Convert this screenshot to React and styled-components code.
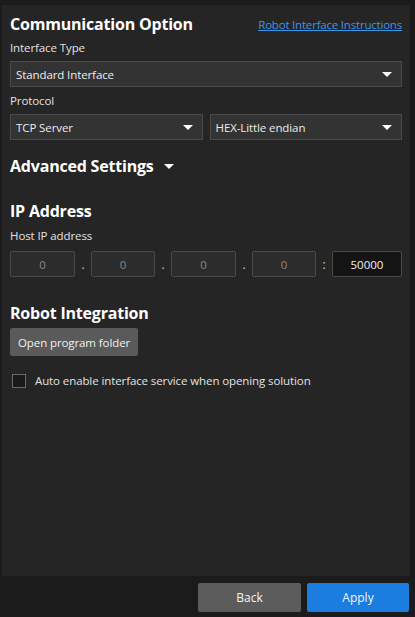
import React from "react";
import styled, { createGlobalStyle } from "styled-components";

const GlobalStyle = createGlobalStyle`
  html, body {
    margin: 0;
    padding: 0;
    background: #1b1b1b;
    font-family: "Open Sans", "Noto Sans", sans-serif;
    color: #e6e6e6;
  }
  * { box-sizing: border-box; }
`;

const Page = styled.div`
  height: 617px;
  display: flex;
  flex-direction: column;
`;

const Panel = styled.div`
  flex: 1;
  margin: 5px 5px 0 2px;
  background: #252525;
  padding: 8px 8px 0 8px;
`;

const HeaderRow = styled.div`
  display: flex;
  justify-content: space-between;
  align-items: center;
  height: 22px;
`;

const Title = styled.h2`
  margin: 0;
  font-size: 16px;
  line-height: 22px;
  font-weight: 700;
  color: #ffffff;
  letter-spacing: -0.2px;
  display: flex;
  align-items: center;
  gap: 10px;
`;

const Link = styled.a`
  font-size: 11.5px;
  color: #3b97e8;
  text-decoration: underline;
  cursor: pointer;
  letter-spacing: -0.2px;
`;

const Label = styled.div`
  font-size: 11.5px;
  color: #e2e2e2;
  margin: ${p => p.$top ?? 6}px 0 ${p => p.$bottom ?? 5}px;
  line-height: 16px;
  letter-spacing: -0.1px;
`;

const Row = styled.div`
  display: flex;
  align-items: center;
  gap: ${p => p.$gap ?? 7}px;
`;

const Select = styled.div`
  flex: 1;
  height: 26px;
  background: #333333;
  border: 1px solid #4a4a4a;
  display: flex;
  align-items: center;
  justify-content: space-between;
  padding: 0 9px 0 5px;
  font-size: 11.5px;
  color: #ececec;
  letter-spacing: -0.1px;
`;

const Caret = styled.span`
  width: 0;
  height: 0;
  border-left: 5px solid transparent;
  border-right: 5px solid transparent;
  border-top: 5px solid #ffffff;
`;

const Section = styled.div`
  margin-top: ${p => p.$top}px;
`;

const IpBox = styled.div`
  flex: none;
  width: ${p => p.$w}px;
  height: 26px;
  border: 1px solid #4a4a4a;
  background: ${p => (p.$dark ? "#141414" : "#2c2c2c")};
  color: ${p => (p.$dark ? "#f2f2f2" : "#8a8a8a")};
  font-size: 11.5px;
  display: flex;
  align-items: center;
  justify-content: center;
  border-radius: 2px;
`;

const Sep = styled.span`
  flex: none;
  width: 16px;
  text-align: center;
  font-size: 12px;
  color: #cfcfcf;
`;

const GreyButton = styled.button`
  display: block;
  height: 28px;
  padding: 0 8px;
  background: #5a5a5a;
  border: none;
  border-radius: 2px;
  color: #f0f0f0;
  font-family: inherit;
  font-size: 11.5px;
  letter-spacing: -0.1px;
  margin-top: 4px;
`;

const CheckRow = styled.label`
  display: flex;
  align-items: center;
  gap: 9px;
  margin-top: 17px;
  padding-left: 2px;
  font-size: 11.5px;
  color: #e2e2e2;
  letter-spacing: -0.1px;
`;

const Box = styled.span`
  width: 14px;
  height: 14px;
  border: 1px solid #6a6a6a;
  background: #1a1a1a;
`;

const Footer = styled.div`
  display: flex;
  justify-content: flex-end;
  gap: 6px;
  padding: 7px 6px 5px;
`;

const FooterButton = styled.button`
  width: ${p => p.$w}px;
  height: 29px;
  border: none;
  border-radius: 2px;
  background: ${p => (p.$primary ? "#1a7ddf" : "#5c5c5c")};
  color: #f4f4f4;
  font-family: inherit;
  font-size: 12px;
`;

export default function App() {
  return (
    <Page>
      <GlobalStyle />
      <Panel>
        <HeaderRow>
          <Title>Communication Option</Title>
          <Link>Robot Interface Instructions</Link>
        </HeaderRow>
        <Label $top={5}>Interface Type</Label>
        <Select>
          Standard Interface <Caret />
        </Select>
        <Label $top={6}>Protocol</Label>
        <Row>
          <Select>
            TCP Server <Caret />
          </Select>
          <Select>
            HEX-Little endian <Caret />
          </Select>
        </Row>

        <Section $top={15}>
          <Title>
            Advanced Settings <Caret />
          </Title>
        </Section>

        <Section $top={23}>
          <Title>IP Address</Title>
          <Label $top={6} $bottom={7}>Host IP address</Label>
          <Row $gap={0}>
            <IpBox $w={65}>0</IpBox>
            <Sep>.</Sep>
            <IpBox $w={64}>0</IpBox>
            <Sep>.</Sep>
            <IpBox $w={65}>0</IpBox>
            <Sep>.</Sep>
            <IpBox $w={64}>0</IpBox>
            <Sep>:</Sep>
            <IpBox $w={70} $dark>50000</IpBox>
          </Row>
        </Section>

        <Section $top={25}>
          <Title>Robot Integration</Title>
          <GreyButton>Open program folder</GreyButton>
          <CheckRow>
            <Box />
            Auto enable interface service when opening solution
          </CheckRow>
        </Section>
      </Panel>
      <Footer>
        <FooterButton $w={103}>Back</FooterButton>
        <FooterButton $w={102} $primary>Apply</FooterButton>
      </Footer>
    </Page>
  );
}
